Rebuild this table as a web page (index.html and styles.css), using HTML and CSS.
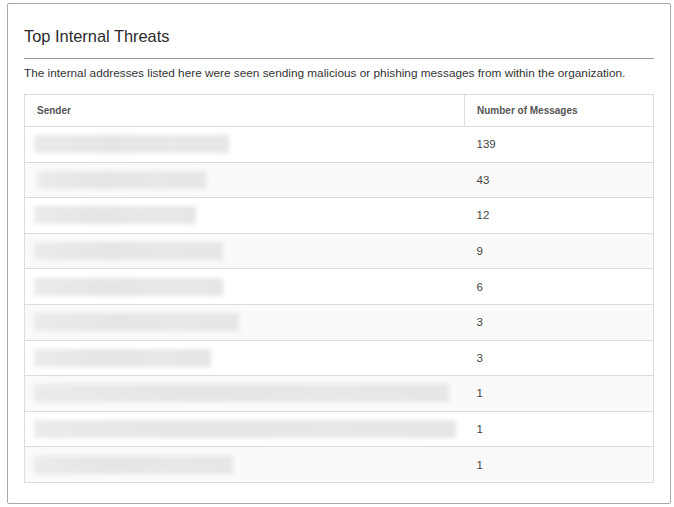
FILE: index.html
```html
<!DOCTYPE html>
<html>
<head>
<meta charset="utf-8">
<link rel="stylesheet" href="styles.css">
</head>
<body>
<div class="card">
  <h2 class="title">Top Internal Threats</h2>
  <p class="desc">The internal addresses listed here were seen sending malicious or phishing messages from within the organization.</p>
  <table class="tbl">
    <thead>
      <tr><th class="c1">Sender</th><th class="c2">Number of Messages</th></tr>
    </thead>
    <tbody>
      <tr><td class="c1"><div class="blur" style="width:195px"></div></td><td class="c2">139</td></tr>
      <tr class="alt"><td class="c1"><div class="blur shift" style="width:168px"></div></td><td class="c2">43</td></tr>
      <tr><td class="c1"><div class="blur" style="width:162px"></div></td><td class="c2">12</td></tr>
      <tr class="alt"><td class="c1"><div class="blur" style="width:189px"></div></td><td class="c2">9</td></tr>
      <tr><td class="c1"><div class="blur" style="width:189px"></div></td><td class="c2">6</td></tr>
      <tr class="alt"><td class="c1"><div class="blur" style="width:205px"></div></td><td class="c2">3</td></tr>
      <tr><td class="c1"><div class="blur" style="width:177px"></div></td><td class="c2">3</td></tr>
      <tr class="alt"><td class="c1"><div class="blur" style="width:415px"></div></td><td class="c2">1</td></tr>
      <tr><td class="c1"><div class="blur" style="width:422px"></div></td><td class="c2">1</td></tr>
      <tr class="alt"><td class="c1"><div class="blur" style="width:199px"></div></td><td class="c2">1</td></tr>
    </tbody>
  </table>
</div>
</body>
</html>
```
FILE: styles.css
```css
html, body {
  margin: 0;
  padding: 0;
  background: #fff;
}
body {
  font-family: "Liberation Sans", Arial, sans-serif;
  color: #333;
}
.card {
  margin: 3px 0 0 7px;
  width: 664px;
  height: 501px;
  border: 1px solid #a9a9a9;
  border-radius: 2px;
  padding: 0 16px;
  box-sizing: border-box;
}
.title {
  margin: 22px 0 0 0;
  padding-bottom: 12px;
  font-size: 16.4px;
  font-weight: normal;
  line-height: 20px;
  color: #2b2b2b;
  border-bottom: 1px solid #9a9a9a;
}
.desc {
  margin: 7px 0 0 0;
  font-size: 11.8px;
  line-height: 15px;
  color: #333;
}
.tbl {
  margin-top: 13px;
  width: 630px;
  border-collapse: collapse;
  border: 1px solid #dcdcdc;
}
.tbl th {
  height: 32px;
  text-align: left;
  font-size: 10px;
  font-weight: bold;
  color: #555;
  padding: 0 0 0 12px;
  box-sizing: border-box;
}
.tbl th.c1 { width: 440px; border-right: 1px solid #dcdcdc; }
.tbl td {
  height: 35.6px;
  border-top: 1px solid #dcdcdc;
  font-size: 11.5px;
  color: #444;
  padding: 0 0 0 12px;
  box-sizing: border-box;
}
.tbl td.c1 { padding-left: 9px; }
.tbl tr.alt td { background: #fafafa; }
.blur {
  height: 18px;
  background: linear-gradient(90deg, #ebebeb, #e5e5e5 40%, #e8e8e8 70%, #e6e6e6);
  filter: blur(2px);
}
.blur.shift { margin-left: 4px; }
```
